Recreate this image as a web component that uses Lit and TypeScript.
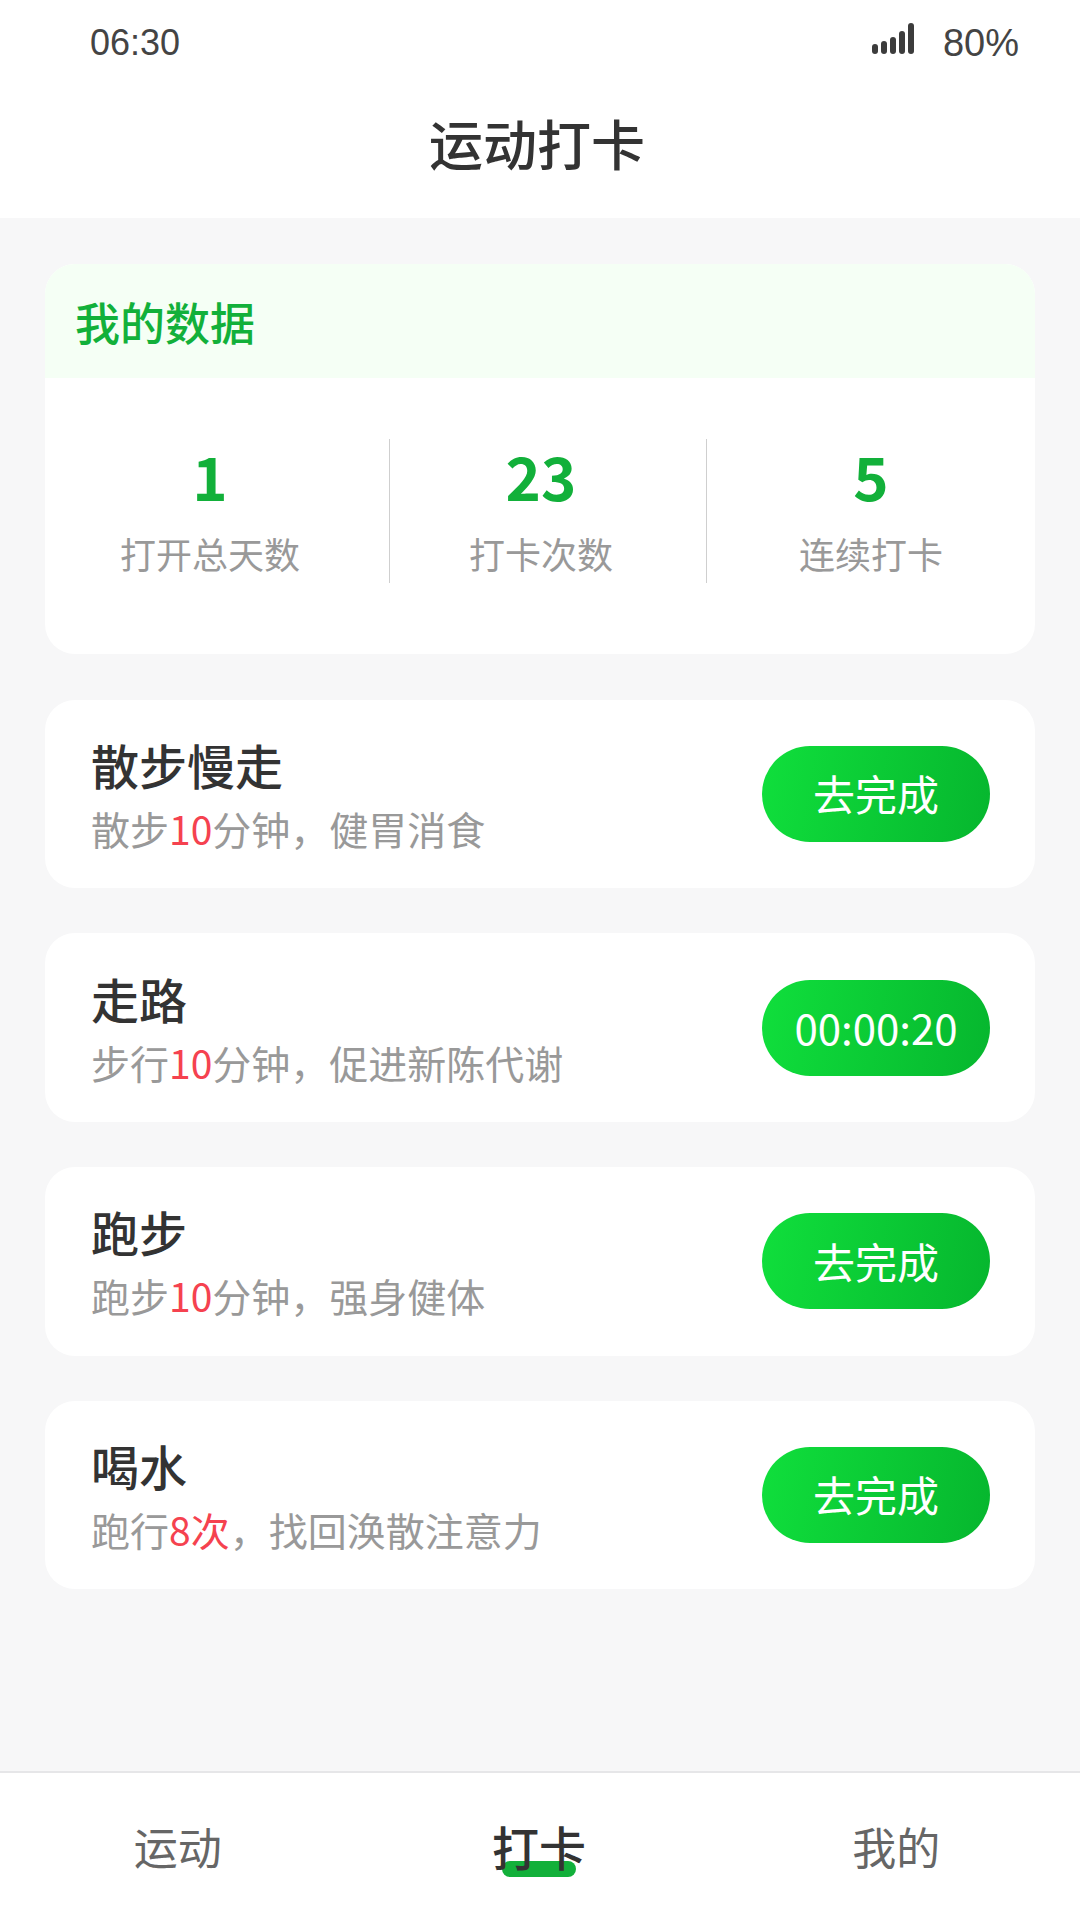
import { LitElement, html, css } from "lit";
import { customElement } from "lit/decorators.js";

const tasks = [
  { title: "散步慢走", pre: "散步", red: "10", post: "分钟，健胃消食", action: "去完成" },
  { title: "走路", pre: "步行", red: "10", post: "分钟，促进新陈代谢", action: "00:00:20" },
  { title: "跑步", pre: "跑步", red: "10", post: "分钟，强身健体", action: "去完成" },
  { title: "喝水", pre: "跑行", red: "8次", post: "，找回涣散注意力", action: "去完成" },
];
const stats = [
  { n: "1", l: "打开总天数" },
  { n: "23", l: "打卡次数" },
  { n: "5", l: "连续打卡" },
];
const tabs = [
  { t: "运动", on: false },
  { t: "打卡", on: true },
  { t: "我的", on: false },
];

@customElement("app-root")
export class AppRoot extends LitElement {
  static styles = css`
    :host {
      display: flex;
      flex-direction: column;
      width: 1080px;
      height: 1920px;
      background: #f7f7f8;
      font-family: "Noto Sans CJK SC", "Noto Sans", sans-serif;
      color: #333;
      overflow: hidden;
    }
    .top {
      background: #fff;
      height: 218px;
      flex: none;
    }
    .status {
      height: 86px;
      padding: 0 61px 0 90px;
      display: flex;
      align-items: center;
      justify-content: space-between;
      font-family: "Liberation Sans", sans-serif;
      font-size: 36px;
      color: #444;
    }
    .status-right {
      display: flex;
      align-items: center;
      gap: 28px;
    }
    .battery {
      font-size: 38px;
    }
    .signal {
      display: block;
      margin-bottom: 9px;
    }
    .title {
      height: 114px;
      line-height: 114px;
      padding-right: 6px;
      text-align: center;
      font-size: 54px;
      font-weight: 500;
      color: #333;
    }
    .main {
      flex: 1;
      padding: 46px 45px 0;
      display: flex;
      flex-direction: column;
      gap: 45.07px;
    }
    .card {
      background: #fff;
      border-radius: 30px;
      overflow: hidden;
      margin-bottom: 0.6px;
    }
    .card-head {
      height: 114px;
      padding-left: 30px;
      background: #f5fff5;
      color: #12b03a;
      font-size: 45px;
      font-weight: 500;
      line-height: 116px;
    }
    .stats {
      height: 276px;
      padding-top: 61px;
      box-sizing: border-box;
      display: grid;
      grid-template-columns: 345px 317px 328px;
      align-items: start;
    }
    .stat {
      height: 144px;
      box-sizing: border-box;
      text-align: center;
      border-right: 1px solid #cfcfcf;
    }
    .stat:nth-child(1) {
      padding-right: 14px;
    }
    .stat:nth-child(2) {
      padding-right: 14px;
    }
    .stat:last-child {
      border-right: none;
    }
    .stat-n {
      font-size: 60px;
      font-weight: 700;
      line-height: 76px;
      margin-top: -2px;
      color: #12b03a;
    }
    .stat-l {
      font-size: 36px;
      line-height: 50px;
      margin-top: 15px;
      color: #999;
    }
    .task {
      height: 188.6px;
      padding: 0 45px 0 46px;
      background: #fff;
      border-radius: 30px;
      display: flex;
      align-items: center;
      justify-content: space-between;
    }
    .task-title {
      font-size: 48px;
      font-weight: 500;
      line-height: 64px;
      color: #333;
    }
    .task-desc {
      font-size: 39px;
      line-height: 56px;
      margin-top: 4px;
      color: #999;
    }
    .red {
      color: #f5424f;
    }
    .btn {
      width: 228px;
      height: 96px;
      box-sizing: border-box;
      padding-bottom: 2px;
      border-radius: 48px;
      background: linear-gradient(100deg, #10df3c, #06b62e);
      color: #fff;
      font-size: 42px;
      display: flex;
      align-items: center;
      justify-content: center;
    }
    .tabbar {
      flex: none;
      height: 147px;
      border-top: 2px solid #e6e6e8;
      background: #fff;
      display: flex;
    }
    .tab {
      flex: 1;
      display: flex;
      align-items: center;
      justify-content: center;
      font-size: 44px;
      line-height: 64px;
      color: #666;
      padding: 0 6px 2px 0;
    }
    .tab-inner {
      position: relative;
    }
    .tab.on {
      color: #333;
      font-size: 47px;
      font-weight: 500;
      padding-right: 2px;
    }
    .tab.on .tab-inner::after {
      content: "";
      position: absolute;
      left: 10px;
      right: 10px;
      bottom: 1px;
      height: 16px;
      border-radius: 8px;
      background: #12b03a;
    }
    .tab-text {
      position: relative;
      z-index: 1;
    }
  `;

  render() {
    return html`
      <div class="top">
        <div class="status">
          <span>06:30</span>
          <div class="status-right">
            <svg class="signal" width="43" height="32" viewBox="0 0 43 32" fill="#3c3c3c">
              <rect x="0" y="21" width="6" height="10" rx="3" />
              <rect x="9" y="18" width="6" height="13" rx="3" />
              <rect x="18" y="14" width="6" height="17" rx="3" />
              <rect x="27" y="8" width="6" height="23" rx="3" />
              <rect x="36" y="0" width="6" height="31" rx="3" />
            </svg>
            <span class="battery">80%</span>
          </div>
        </div>
        <div class="title">运动打卡</div>
      </div>
      <div class="main">
        <div class="card">
          <div class="card-head">我的数据</div>
          <div class="stats">
            ${stats.map(
              (s) => html`<div class="stat">
                <div class="stat-n">${s.n}</div>
                <div class="stat-l">${s.l}</div>
              </div>`
            )}
          </div>
        </div>
        ${tasks.map(
          (t) => html`<div class="task">
            <div>
              <div class="task-title">${t.title}</div>
              <div class="task-desc">${t.pre}<span class="red">${t.red}</span>${t.post}</div>
            </div>
            <div class="btn">${t.action}</div>
          </div>`
        )}
      </div>
      <div class="tabbar">
        ${tabs.map(
          (t) => html`<div class="tab ${t.on ? "on" : ""}">
            <div class="tab-inner"><span class="tab-text">${t.t}</span></div>
          </div>`
        )}
      </div>
    `;
  }
}
